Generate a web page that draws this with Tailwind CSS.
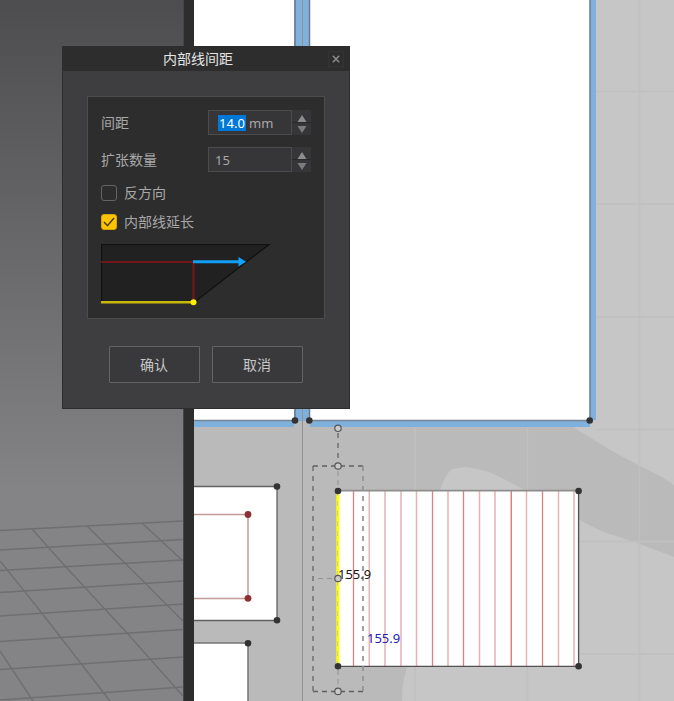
<!DOCTYPE html>
<html lang="zh-CN">
<head>
<meta charset="utf-8">
<meta name="viewport" content="width=device-width, initial-scale=1">
<title>内部线间距</title>
<script src="https://cdn.jsdelivr.net/npm/@tailwindcss/browser@4"></script>
</head>
<body class="relative flex h-screen overflow-hidden bg-[#c6c6c6] font-['Noto_Sans','Noto_Sans_CJK_SC',sans-serif] text-sm text-[#a8a8a8]">

  <!-- 3D viewport -->
  <section class="w-[183px] shrink-0 bg-linear-to-b from-[#4d4d4f] from-0% via-[#848486] via-70% to-[#848486]" aria-label="3D">
    <svg class="h-full w-full" viewBox="0 0 183 701" preserveAspectRatio="xMinYMin slice" fill="none" stroke="#6f6f71" stroke-width="1.400">
      <path d="M0 530.500L183 521M0 550L183 539.500M0 570.500L183 560M0 592.500L183 581M0 616L183 604M0 641.500L183 629.500M0 669.500L183 657M0 700L183 687"/>
      <path d="M142 523L183 561M87 526L135 573L183 621M32 529L65 566L127 633L183 696M0 561L41 612L110 701M0 651L33 701"/>
    </svg>
  </section>
  <div class="w-[11px] shrink-0 border-l border-[#454545] bg-[#2d2d2d]"></div>

  <!-- 2D pattern canvas -->
  <main class="min-w-0 flex-1">
    <svg class="h-full w-full" viewBox="194 0 480 701" preserveAspectRatio="xMinYMin slice" fill="none">
      <path fill="#bababa" d="M194 400H530L573 427L612 451L640 466L662 477L674 485V557L640 544L604 532Q590 526 580 520L545 500L525 490L500 477Q485 469 465 467L452 469Q445 475 440 490L407 668Q402 680 402 701H194Z"/>
      <path stroke="#c0c0c0" stroke-width="1.500" d="M415 427V701M527.500 427V701M639.500 0V701M596 91.500H674M596 204H674M596 317H674M596 429.500H674M579 541.500H674M579 654H674"/>

      <!-- large selected pieces -->
      <path fill="#80b0dc" d="M294 0H310V421H294ZM194 420H294V427H194ZM310 420H590V427H310ZM590 0H596V420H590Z"/>
      <path fill="#fff" d="M194 0H294V420H194ZM310 0H590V420H310Z"/>
      <path stroke="#667c8c" stroke-width="1.500" d="M295 0V421M590 0V420M309.500 0V421"/>
      <path stroke="#75858d" stroke-width="1.500" d="M194 420.500H295M309 420.500H590"/>
      <path stroke="#929292" d="M302.500 0V701"/>

      <!-- small pieces on the left -->
      <path fill="#fff" stroke="#626262" stroke-width="1.300" d="M193 486.500H277V620.500H193"/>
      <path stroke="#c39a9a" stroke-width="1.500" d="M194 514.500H248V598.500H194"/>
      <path fill="#fff" stroke="#747474" stroke-width="1.500" d="M193 643H248V702H193"/>

      <!-- piece with spaced internal lines -->
      <path fill="#fff" d="M338 491H578V666H338Z"/>
      <path stroke="#e5b3b3" stroke-width="1.500" d="M353.500 491V666M369.300 491V666M385 491V666M401 491V666M416.500 491V666M432.500 491V666M448 491V666M463.500 491V666M479.500 491V666M495 491V666M511 491V666M526.500 491V666M542.500 491V666M558.500 491V666M574 491V666"/>
      <path stroke="#dc8080" d="M353.500 491V666M432.500 491V666M463.500 491V666M511.500 491V666M542.500 491V666"/>
      <path stroke="#8e8e8e" stroke-width="1.700" d="M338 490.700H578"/>
      <path stroke="#505050" stroke-width="1.300" d="M578.600 491V666.400H338"/>
      <path stroke="#ffff00" stroke-width="3" d="M337.800 491V666"/>
      <path stroke="#d6d650" stroke-dasharray="5 5" d="M337.500 491V666"/>

      <!-- selection frame -->
      <path stroke="#7a7a7a" stroke-width="1.700" stroke-dasharray="5 5" d="M338 433V462M313 466V691"/>
      <path stroke="#606060" stroke-width="1.500" stroke-dasharray="5 4" d="M313 466H363M313 691.400H363"/>
      <path stroke="#929292" stroke-width="1.700" stroke-dasharray="5 5" d="M363 466V691"/>
      <path stroke="#929292" stroke-dasharray="5 4" d="M338 471V487M338 670V687M318 578.500H350"/>

      <g font-family="Noto Sans, sans-serif" font-size="13">
        <text x="338" y="579" fill="#181818">155.9</text>
        <text x="367" y="643" fill="#2222b4">155.9</text>
      </g>

      <g fill="#333">
        <circle cx="295" cy="420.500" r="3.300"/><circle cx="309.300" cy="420.500" r="3.300"/><circle cx="589.700" cy="420.500" r="3.300"/>
        <circle cx="277" cy="486.500" r="3.300"/><circle cx="277" cy="620.300" r="3.300"/><circle cx="248" cy="643.300" r="3.300"/>
        <circle cx="338" cy="491" r="3.300"/><circle cx="578.600" cy="491" r="3.300"/><circle cx="338" cy="666.300" r="3.300"/><circle cx="578.600" cy="666.300" r="3.300"/>
      </g>
      <g fill="#8c3034"><circle cx="248" cy="514.500" r="3.400"/><circle cx="248" cy="598.300" r="3.400"/></g>
      <g fill="#cacaca" stroke="#555" stroke-width="1.200">
        <circle cx="338" cy="428.300" r="3.200"/><circle cx="338" cy="466" r="3.200"/><circle cx="338" cy="578.500" r="3.200"/><circle cx="338" cy="691.400" r="3.200"/>
      </g>
    </svg>
  </main>

  <!-- dialog -->
  <form class="absolute top-[46px] left-[62px] w-72 border border-[#2d2d2d] bg-[#3e3e40]" role="dialog" aria-labelledby="title">
    <header class="relative flex h-6 items-center justify-center bg-[#2d2d2d] pr-4 text-[#e4e4e4]">
      <h1 id="title" class="leading-6">内部线间距</h1>
      <button type="button" aria-label="关闭" class="absolute top-1 right-[5px] flex size-4 items-center justify-center border border-[#343434]">
        <svg class="size-2" viewBox="0 0 8 8" stroke="#8a8a8a" stroke-width="1.500"><path d="M.8 .8L7.200 7.200M7.200 .8L.8 7.200"/></svg>
      </button>
    </header>

    <div class="mx-6 mt-[25px] flex flex-col border border-[#4c4c4c] bg-[#2d2d2d] px-[13px] pt-[13px] pb-3">
      <div class="flex items-center">
        <label for="gap" class="w-[107px]">间距</label>
        <div class="flex h-[25px] w-[84px] items-center gap-[3px] border border-[#4c4c4c] bg-[#363638] pl-[9px]">
          <input id="gap" value="14.0" class="h-4 w-7 bg-[#0078d7] text-center text-[13px] leading-4 text-white outline-none">
          <span class="text-[13px] leading-4">mm</span>
        </div>
        <div class="flex w-[19px] flex-col gap-px bg-[#292929]">
          <button type="button" aria-label="增加间距" class="flex h-3 items-center justify-center bg-[#363638] pt-1"><svg class="h-[7px] w-2.5" viewBox="0 0 10 7"><path fill="#8c8c8c" d="M5 0L9.500 7H.5Z"/></svg></button>
          <button type="button" aria-label="减少间距" class="flex h-3 items-center justify-center bg-[#363638]"><svg class="h-[7px] w-2.5" viewBox="0 0 10 7"><path fill="#7c7c7c" d="M5 7L.5 0H9.500Z"/></svg></button>
        </div>
      </div>
      <div class="mt-3 flex items-center">
        <label for="count" class="w-[107px]">扩张数量</label>
        <input id="count" value="15" class="h-[25px] w-[84px] border border-[#4c4c4c] bg-[#363638] pl-1.5 text-[13px] outline-none">
        <div class="flex w-[19px] flex-col gap-px bg-[#292929]">
          <button type="button" aria-label="增加数量" class="flex h-3 items-center justify-center bg-[#363638] pt-1"><svg class="h-[7px] w-2.5" viewBox="0 0 10 7"><path fill="#8c8c8c" d="M5 0L9.500 7H.5Z"/></svg></button>
          <button type="button" aria-label="减少数量" class="flex h-3 items-center justify-center bg-[#363638]"><svg class="h-[7px] w-2.5" viewBox="0 0 10 7"><path fill="#7c7c7c" d="M5 7L.5 0H9.500Z"/></svg></button>
        </div>
      </div>
      <label class="mt-[11px] flex h-5 items-center gap-[7px]">
        <input type="checkbox" class="size-4 appearance-none rounded-[3px] border border-[#646464]">
        <span>反方向</span>
      </label>
      <label class="mt-[9px] flex h-5 items-center gap-[7px]">
        <span class="relative size-4">
          <input type="checkbox" checked class="peer block size-4 appearance-none rounded-[3px] border border-[#646464] checked:border-[#d9a400] checked:bg-[#ffc400]">
          <svg class="pointer-events-none invisible absolute inset-0 size-4 peer-checked:visible" viewBox="0 0 16 16" fill="none" stroke="#493c0c" stroke-width="1.500"><path d="M3 8L6.500 11.700L13 4"/></svg>
        </span>
        <span>内部线延长</span>
      </label>
      <svg class="mt-[11px] h-[63px] w-[170px]" viewBox="0 0 170 63" fill="none">
        <path fill="#212121" stroke="#101010" stroke-width="1.200" d="M.5 1.500H168L93 59.500H.5Z"/>
        <path stroke="#8c1418" stroke-width="1.700" d="M0 19H93"/>
        <path stroke="#7c1519" stroke-width="2" d="M92.500 19V59"/>
        <path stroke="#c8b808" stroke-width="2.400" d="M0 59.200H93"/>
        <circle cx="92.500" cy="59.200" r="3" fill="#ffee00"/>
        <path stroke="#109ff5" stroke-width="3" d="M92 18.800H140"/>
        <path fill="#10a4ff" d="M137.500 14L145 18.800L137.500 23.600Z"/>
      </svg>
    </div>

    <footer class="flex justify-center gap-3 pt-[27px] pr-px pb-[25px] text-[#c6c6c6]">
      <button class="h-[37px] w-[91px] rounded-[1px] border border-[#646466] bg-[#39393b]">确认</button>
      <button type="button" class="h-[37px] w-[91px] rounded-[1px] border border-[#646466] bg-[#39393b]">取消</button>
    </footer>
  </form>
</body>
</html>
